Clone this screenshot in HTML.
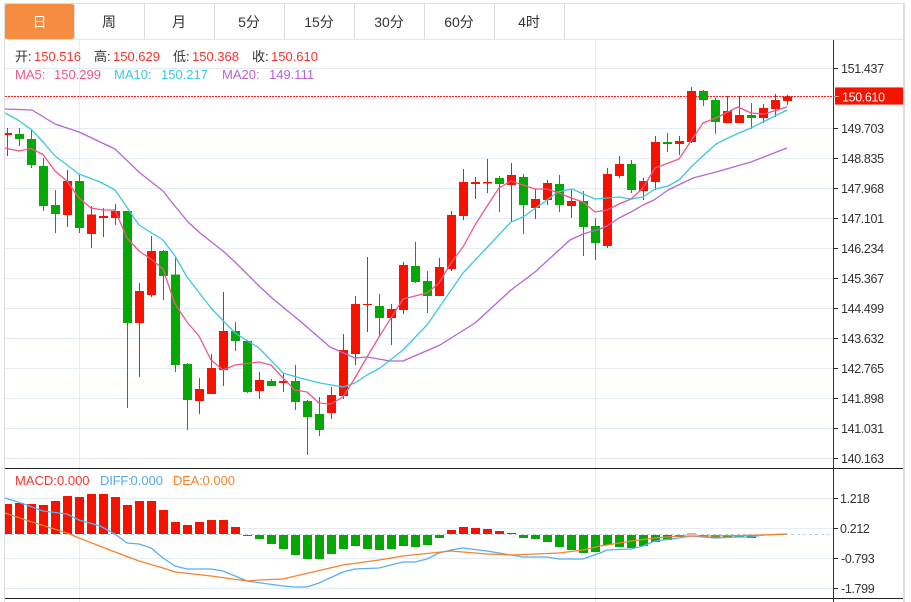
<!DOCTYPE html>
<html><head><meta charset="utf-8"><style>
html,body{margin:0;padding:0;background:#fff;width:911px;height:602px;overflow:hidden}
svg{display:block}
text{font-family:"Liberation Sans","Noto Sans CJK SC",sans-serif}
polyline{stroke-linejoin:round}
.l{fill:#333;font-size:13px}
.v{fill:#f5342c;font-size:13px}
.a{fill:#333;font-size:12.5px;letter-spacing:-.35px}
.t{fill:#333;font-size:14px;text-anchor:middle}
</style></head><body>
<svg width="911" height="602" viewBox="0 0 911 602" xmlns="http://www.w3.org/2000/svg">
<rect width="911" height="602" fill="#fff"/>
<!-- frame -->
<g fill="#ddd" shape-rendering="crispEdges">
<rect x="4" y="3" width="900" height="1"/>
<rect x="4" y="3" width="1" height="599"/>
<rect x="903" y="3" width="2" height="599"/>
<rect x="74" y="4" width="1" height="35"/><rect x="144" y="4" width="1" height="35"/><rect x="214" y="4" width="1" height="35"/><rect x="284" y="4" width="1" height="35"/><rect x="354" y="4" width="1" height="35"/><rect x="424" y="4" width="1" height="35"/><rect x="494" y="4" width="1" height="35"/><rect x="564" y="4" width="1" height="35"/>
<rect x="5" y="39" width="898" height="1" fill="#e5e5e5"/>
</g>
<rect x="5" y="4" width="69" height="35" rx="2" fill="#f58c40"/>
<text x="39.5" y="27" class="t" style="fill:#fff">日</text>
<text x="109" y="27" class="t">周</text>
<text x="179" y="27" class="t">月</text>
<text x="249" y="27" class="t">5分</text>
<text x="319" y="27" class="t">15分</text>
<text x="389" y="27" class="t">30分</text>
<text x="459" y="27" class="t">60分</text>
<text x="529" y="27" class="t">4时</text>
<!-- grid -->
<g fill="#e4edf3" shape-rendering="crispEdges">
<rect x="79" y="40" width="1" height="562"/><rect x="595" y="40" width="1" height="562"/>
<rect x="5" y="68" width="828" height="1"/><rect x="5" y="98" width="828" height="1"/><rect x="5" y="128" width="828" height="1"/><rect x="5" y="158" width="828" height="1"/><rect x="5" y="188" width="828" height="1"/><rect x="5" y="218" width="828" height="1"/><rect x="5" y="248" width="828" height="1"/><rect x="5" y="278" width="828" height="1"/><rect x="5" y="308" width="828" height="1"/><rect x="5" y="338" width="828" height="1"/><rect x="5" y="368" width="828" height="1"/><rect x="5" y="398" width="828" height="1"/><rect x="5" y="428" width="828" height="1"/><rect x="5" y="458" width="828" height="1"/>
<rect x="5" y="498" width="828" height="1"/><rect x="5" y="528" width="828" height="1"/><rect x="5" y="558" width="828" height="1"/><rect x="5" y="588" width="828" height="1"/>
</g>
<!-- header text -->
<text x="15" y="61" class="l">开:</text><text x="34" y="61" class="v">150.516</text>
<text x="94" y="61" class="l">高:</text><text x="113" y="61" class="v">150.629</text>
<text x="173" y="61" class="l">低:</text><text x="192" y="61" class="v">150.368</text>
<text x="252" y="61" class="l">收:</text><text x="271" y="61" class="v">150.610</text>
<g font-size="13">
<text x="15" y="79" fill="#f1568a" font-size="13">MA5:</text><text x="54" y="79" fill="#f1568a" font-size="13">150.299</text>
<text x="114" y="79" fill="#3cc8e0" font-size="13">MA10:</text><text x="161" y="79" fill="#3cc8e0" font-size="13">150.217</text>
<text x="222" y="79" fill="#b764d2" font-size="13">MA20:</text><text x="269" y="79" fill="#b764d2" font-size="13">149.111</text>
</g>
<!-- price line -->
<line x1="5" y1="96.5" x2="833" y2="96.5" stroke="#f5201a" stroke-width="1" stroke-dasharray="2 1"/>
<!-- wicks -->
<path fill="none" stroke="#f01a0c" stroke-width="1" d="M7.5 128V156M67.5 170V227M91.5 206V248M103.5 208V237M115.5 204V225M139.5 283V377M151.5 236V297M199.5 378V414M211.5 354V394M223.5 292V386M259.5 372V399M283.5 373V392M331.5 387V419M343.5 334V399M355.5 296V365M367.5 257V332M391.5 304V345M403.5 262V314M439.5 258V296M451.5 211V271M463.5 169V220M475.5 177V199M487.5 159V193M511.5 163V222M535.5 189V219M547.5 180V205M571.5 190V218M607.5 168V248M619.5 156V178M643.5 178V200M655.5 136V190M679.5 136V155M691.5 87V143M727.5 96V123M739.5 96V123M763.5 104V123M775.5 94V117M787.5 95V105"/>
<path fill="none" stroke="#0a9e0a" stroke-width="1" d="M19.5 128V146M31.5 129V168M43.5 158V211M55.5 190V233M79.5 175V233M127.5 211V408M163.5 250V300M175.5 256V372M187.5 363V430M235.5 322V351M247.5 341V393M271.5 379V386M295.5 365V410M307.5 400V455M319.5 397V436M379.5 294V337M415.5 242V283M427.5 271V313M499.5 176V212M523.5 174V234M559.5 175V212M583.5 191V256M595.5 218V260M631.5 160V193M667.5 133V152M703.5 90V106M715.5 98V134M751.5 103V129"/>
<!-- bodies -->
<path fill="#f51300" d="M5 133h7V135H5zM63 181h9V215h-9zM87 214.5h9V234h-9zM99 216h9V218h-9zM111 211h9V218h-9zM135 291h9V323h-9zM147 251h9V295h-9zM195 389h9V401h-9zM207 368h9V394h-9zM219 331h9V370h-9zM255 380h9V391h-9zM279 381h9V383h-9zM327 395h9V413h-9zM339 350h9V396h-9zM351 304h9V354h-9zM363 304h9V305h-9zM387 309h9V318h-9zM399 265h9V310h-9zM435 267h9V296h-9zM447 215h9V269h-9zM459 182h9V216h-9zM471 182h9V184h-9zM483 182h9V183.5h-9zM507 175h9V185h-9zM531 199h9V208h-9zM543 183h9V200h-9zM567 201h9V206h-9zM603 174h9V246h-9zM615 164h9V176h-9zM639 181h9V191h-9zM651 142h9V182h-9zM675 141h9V144h-9zM687 91h9V142h-9zM723 111h9V123h-9zM735 115h9V123h-9zM759 108h9V118h-9zM771 100h9V109h-9zM783 96.5h9V101h-9z"/>
<path fill="#05a705" d="M15 134h9V139h-9zM27 139h9V165h-9zM39 166h9V206h-9zM51 205h9V214h-9zM75 181h9V228h-9zM123 211h9V323h-9zM159 251h9V276h-9zM171 274.5h9V365h-9zM183 364h9V400h-9zM231 331h9V341h-9zM243 341h9V392h-9zM267 381h9V386h-9zM291 381h9V402h-9zM303 401h9V417h-9zM315 414h9V430h-9zM375 306h9V318h-9zM411 266h9V282h-9zM423 281h9V296h-9zM495 178h9V184h-9zM519 177h9V205h-9zM555 184h9V205h-9zM579 201h9V227h-9zM591 226h9V243h-9zM627 164h9V190h-9zM663 142h9V144h-9zM699 91h9V100h-9zM711 100h9V122h-9zM747 115h9V118h-9z"/>
<!-- MAs -->
<polyline fill="none" stroke="#b764d2" stroke-width="1.3" points="5,109 32,110 55,124 79,132 115,149 140,173 163,191 170,200 188,222 200,233 223,251 235,262 259,286 272,298 295,317 300,321 330,347 355,358 367,357 390,361 403,361 440,345 475,323 511,290 535,272 570,240 583,234 600,229 607,226 619,218 631,212 643,205 654,200 668,190 693,178 716,172 751,162 774,153 787,148"/>
<polyline fill="none" stroke="#3cc8e0" stroke-width="1.3" points="5,113 18,120 32,130 43,142 55,156 67,165 79,174 100,182 115,190 122,200 139,225 163,240 175,256 187,277 211,308 235,333 259,348 283,373 300,378 320,383 343,387 355,383 367,375 380,368 403,350 427,325 463,273 511,222 523,217 547,200 558,192 572,189 595,199 607,198 619,197 631,199 643,197 655,189 668,186 679,180 693,165 716,144 728,138 739,133 751,128 787,110"/>
<polyline fill="none" stroke="#f1568a" stroke-width="1.3" points="5,148 19,151 31,148.5 43,154.5 55,171 67,181 79,198 91,208 103,210 115,210 127,238 139,251 151,259 163,269 175,304 187,322 199,336 211,360 223,370 235,365 247,363.5 259,362 271,365 283,378 295,390 307,392 319,403 331,404 343,397 355,378 367,357 379,337 403,299 427,293 439,283 451,263 463,247 475,225 491,200 499,188 511,181 523,185 535,189 547,189 559,193 571,198 583,202 595,212 607,210 619,204 631,199 643,188 655,168 679,159 691,141 703,123 716,118 738,107 751,113 764,114 787,107"/>
<!-- MACD -->
<text x="15" y="485" fill="#f5342c" font-size="13">MACD:</text><text x="57" y="485" fill="#f5342c" font-size="13">0.000</text>
<text x="100" y="485" fill="#52a8f0" font-size="13" letter-spacing="-.2">DIFF:</text><text x="130.5" y="485" fill="#52a8f0" font-size="13">0.000</text>
<text x="173" y="485" fill="#f5832c" font-size="13" letter-spacing="-.2">DEA:</text><text x="202.5" y="485" fill="#f5832c" font-size="13">0.000</text>
<line x1="5" y1="534.5" x2="831" y2="534.5" stroke="#a9d8ea" stroke-width="1" stroke-dasharray="3 3"/>
<path fill="#f51300" d="M5 504h7V534H5zM15 503h9V534h-9zM27 504h9V534h-9zM39 505h9V534h-9zM51 501h9V534h-9zM63 496h9V534h-9zM75 497h9V534h-9zM87 494h9V534h-9zM99 494h9V534h-9zM111 497h9V534h-9zM123 505h9V534h-9zM135 501h9V534h-9zM147 501h9V534h-9zM159 510h9V534h-9zM171 522h9V534h-9zM183 525h9V534h-9zM195 522h9V534h-9zM207 520h9V534h-9zM219 520h9V534h-9zM231 527h9V534h-9zM447 530h9V534h-9zM459 527h9V534h-9zM471 528h9V534h-9zM483 529h9V534h-9zM495 531h9V534h-9zM507 533h9V534h-9z"/>
<path fill="#f8a8a8" d="M687 533h9V535h-9z"/>
<path fill="#05a705" d="M243 535h9V536h-9zM255 535h9V539h-9zM267 535h9V544h-9zM279 535h9V549h-9zM291 535h9V555h-9zM303 535h9V559h-9zM315 535h9V559h-9zM327 535h9V554h-9zM339 535h9V549h-9zM351 535h9V546h-9zM363 535h9V549h-9zM375 535h9V550h-9zM387 535h9V549h-9zM399 535h9V546h-9zM411 535h9V547h-9zM423 535h9V545h-9zM435 535h9V538h-9zM519 535h9V538h-9zM531 535h9V539h-9zM543 535h9V542h-9zM555 535h9V547h-9zM567 535h9V550h-9zM579 535h9V553h-9zM591 535h9V552h-9zM603 535h9V545h-9zM615 535h9V547h-9zM627 535h9V548h-9zM639 535h9V546h-9zM651 535h9V542h-9zM663 535h9V540h-9zM675 535h9V537h-9zM699 535h9V537h-9zM711 535h9V538h-9zM723 535h9V537h-9zM735 535h9V537h-9zM747 535h9V538h-9z"/>
<polyline fill="none" stroke="#5aaef2" stroke-width="1.3" points="5,498 18,502 32,507 43,511 67,514 79,520 100,526 115,534 127,543 139,544 151,548 163,558 175,566 187,569 211,569 223,571 247,581 283,586 295,587 307,587 319,583 332,577 343,572 355,569 379,568 403,562 415,562 427,559 439,553 451,550 463,548 487,551 523,557 547,557 559,559 583,559 600,553 607,550 631,549 643,546 655,541 679,538 691,536 715,538 739,537 751,537 763,535 787,534"/>
<polyline fill="none" stroke="#f5832c" stroke-width="1.3" points="5,513 32,522 67,533 79,538 115,552 139,561 163,568 175,572 211,576 247,581 259,580 283,579 300,575 343,565 379,560 403,556 451,551 487,554 511,555 559,553 583,550 600,546 607,545 631,541 655,538 679,536 715,536 763,535 787,534"/>
<!-- separators & axis -->
<g fill="#222" shape-rendering="crispEdges">
<rect x="5" y="468" width="898" height="1"/>
<rect x="5" y="598" width="898" height="1"/>
<rect x="833" y="40" width="1" height="562" fill="#333"/>
<rect x="834" y="68" width="4" height="1"/><rect x="834" y="128" width="4" height="1"/><rect x="834" y="158" width="4" height="1"/><rect x="834" y="188" width="4" height="1"/><rect x="834" y="218" width="4" height="1"/><rect x="834" y="248" width="4" height="1"/><rect x="834" y="278" width="4" height="1"/><rect x="834" y="308" width="4" height="1"/><rect x="834" y="338" width="4" height="1"/><rect x="834" y="368" width="4" height="1"/><rect x="834" y="398" width="4" height="1"/><rect x="834" y="428" width="4" height="1"/><rect x="834" y="458" width="4" height="1"/>
<rect x="834" y="498" width="4" height="1"/><rect x="834" y="528" width="4" height="1"/><rect x="834" y="558" width="4" height="1"/><rect x="834" y="588" width="4" height="1"/>
</g>
<g>
<text x="841" y="73" class="a">151.437</text>
<text x="841" y="133" class="a">149.703</text>
<text x="841" y="163" class="a">148.835</text>
<text x="841" y="193" class="a">147.968</text>
<text x="841" y="223" class="a">147.101</text>
<text x="841" y="253" class="a">146.234</text>
<text x="841" y="283" class="a">145.367</text>
<text x="841" y="313" class="a">144.499</text>
<text x="841" y="343" class="a">143.632</text>
<text x="841" y="373" class="a">142.765</text>
<text x="841" y="403" class="a">141.898</text>
<text x="841" y="433" class="a">141.031</text>
<text x="841" y="463" class="a">140.163</text>
<text x="840" y="503" class="a">1.218</text>
<text x="840" y="533" class="a">0.212</text>
<text x="841" y="563" class="a">-0.793</text>
<text x="841" y="593" class="a">-1.799</text>
</g>
<rect x="835" y="87" width="68" height="18" fill="#f51300"/>
<rect x="835" y="87" width="68" height="1" fill="#f87a6e"/>
<rect x="835" y="104" width="68" height="1" fill="#f87a6e"/>
<rect x="834" y="96" width="5" height="1" fill="#f8897e"/>
<text x="842" y="101.5" fill="#fff" font-size="12.5" letter-spacing="-.35">150.610</text>
</svg>
</body></html>
